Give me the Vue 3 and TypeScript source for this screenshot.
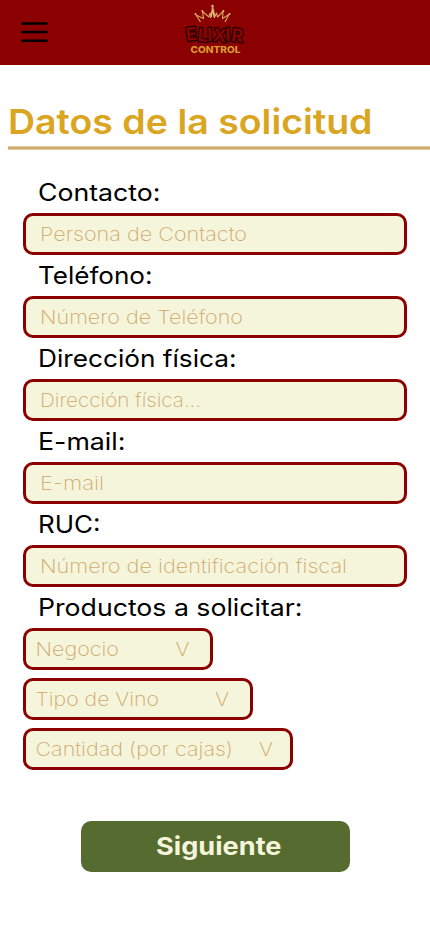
<script setup lang="ts">
import { defineComponent, h } from 'vue'

interface Field {
  label: string
  labelX: number
  labelWidth: number
  hint: string
  hintWidth: number
}

interface Choice {
  text: string
  textX: number
  textWidth: number
  arrowX: number
  width: number
}

// A single line of text fitted to a fixed measure.
const FitText = defineComponent({
  props: {
    text: { type: String, required: true },
    x: { type: Number, required: true },
    y: { type: Number, required: true },
    measure: { type: Number, required: true },
  },
  setup(props) {
    return () =>
      h('svg', { class: 'fit' }, [
        h(
          'text',
          {
            x: props.x,
            y: props.y,
            textLength: props.measure,
            lengthAdjust: 'spacingAndGlyphs',
          },
          props.text,
        ),
      ])
  },
})

const fields: Field[] = [
  { label: 'Contacto', labelX: 15, labelWidth: 122.5, hint: 'Persona de Contacto', hintWidth: 207 },
  { label: 'Teléfono', labelX: 15, labelWidth: 114.5, hint: 'Número de Teléfono', hintWidth: 203 },
  { label: 'Dirección física', labelX: 15, labelWidth: 198.5, hint: 'Dirección física...', hintWidth: 161 },
  { label: 'E-mail', labelX: 15, labelWidth: 87.5, hint: 'E-mail', hintWidth: 64 },
  { label: 'RUC', labelX: 15, labelWidth: 62.5, hint: 'Número de identificación fiscal', hintWidth: 307 },
]

const choices: Choice[] = [
  { text: 'Negocio', textX: 9.5, textWidth: 83.5, arrowX: 149.5, width: 190 },
  { text: 'Tipo de Vino', textX: 9.5, textWidth: 123.5, arrowX: 189, width: 230 },
  { text: 'Cantidad (por cajas)', textX: 9.5, textWidth: 197.5, arrowX: 233, width: 270 },
]
</script>

<template>
  <div class="screen">
    <header class="bar">
      <button class="menu" aria-label="Menú">
        <svg viewBox="0 0 27 21">
          <path d="M1.500 1.500H25.500M1.500 10H25.500M1.500 18.700H25.500" />
        </svg>
      </button>
      <svg class="logo" viewBox="0 0 70 56">
        <path
          class="crown"
          d="M20.500 22 L16 15 L23.500 18.500 L22.500 11.500 L29 17 L30 13 L31.500 16.500 L32.500 6 L35 16.500 L36.500 13 L37.500 17 L43 11.500 L42.500 18.500 L49 14.500 L45 22"
        />
        <path class="crown glow" d="M30.500 18 L32.500 10 L34.500 18" />
        <g class="gems">
          <circle cx="15.500" cy="14" r="1" /><circle cx="22.300" cy="11" r="1" />
          <circle cx="32.500" cy="6" r="1.200" /><circle cx="43.300" cy="11" r="1" />
          <circle cx="49.500" cy="14" r="1" />
        </g>
        <text class="brand" x="6.500" y="41" textLength="56" lengthAdjust="spacingAndGlyphs" rotate="-7 4 -3 6 -3 7">ELIXIR</text>
        <text class="sub" x="10.500" y="52.800" textLength="50" lengthAdjust="spacingAndGlyphs">CONTROL</text>
      </svg>
    </header>

    <h1 class="title">
      <FitText text="Datos de la solicitud" :x="0" :y="69" :measure="364.5" />
    </h1>
    <div class="rule"></div>

    <main class="form">
      <template v-for="f in fields" :key="f.label">
        <label class="label">
          <FitText :text="f.label + ':'" :x="f.labelX" :y="29" :measure="f.labelWidth" />
        </label>
        <div class="box">
          <FitText :text="f.hint" :x="14" :y="25" :measure="f.hintWidth" />
        </div>
      </template>

      <div class="label">
        <FitText text="Productos a solicitar:" :x="15" :y="29" :measure="264.5" />
      </div>
      <div class="choices">
        <div v-for="c in choices" :key="c.text" class="box" :style="{ width: c.width + 'px' }">
          <svg class="fit">
            <text :x="c.textX" y="25" :textLength="c.textWidth" lengthAdjust="spacingAndGlyphs">{{ c.text }}</text>
            <text :x="c.arrowX" y="25" textLength="14" lengthAdjust="spacingAndGlyphs">V</text>
          </svg>
        </div>
      </div>
    </main>

    <button class="next">
      <FitText text="Siguiente" :x="75" :y="34" :measure="125.5" />
    </button>
  </div>
</template>

<style>
body {
  margin: 0;
  background: #fff;
}

.fit {
  display: block;
  width: 100%;
  height: 100%;
  overflow: visible;
}

.fit text {
  fill: currentColor;
}
</style>

<style scoped>
.screen {
  display: flex;
  flex-direction: column;
  height: 932px;
  overflow: hidden;
  font-family: Inter, "Open Sans", sans-serif;
  background: #fff;
}

.bar {
  display: grid;
  grid-template-columns: 180px 70px 1fr;
  height: 65px;
  background: #8b0000;
}

.menu {
  align-self: start;
  width: 27px;
  height: 21px;
  margin: 22px 0 0 21px;
  padding: 0;
  border: 0;
  background: none;
}

.menu svg {
  display: block;
  width: 27px;
  height: 21px;
}

.menu path {
  fill: none;
  stroke: #000;
  stroke-width: 2.6;
  stroke-linecap: round;
}

.logo {
  width: 70px;
  height: 56px;
}

.crown {
  fill: none;
  stroke: #d9a661;
  stroke-width: 1.1;
  stroke-linejoin: round;
}

.glow {
  stroke: #e8c58e;
}

.gems {
  fill: #e3bd80;
}

.brand {
  font-size: 18px;
  font-weight: 700;
  fill: #8b0000;
  stroke: #250000;
  stroke-width: 2.6;
  stroke-linejoin: round;
  paint-order: stroke;
}

.sub {
  font-size: 9px;
  font-weight: 800;
  fill: #d99a32;
}

.title {
  height: 81px;
  margin: 0 0 0 8px;
  color: #daa520;
  font-size: 34.5px;
  font-weight: 600;
}

.rule {
  box-sizing: border-box;
  height: 4px;
  margin-left: 8px;
  border-top: 1px solid #e0c8a0;
  border-bottom: 1px solid #e0c8a0;
  background: #d2ac6e;
}

.form {
  padding: 22px 23px 0;
}

.label {
  display: block;
  height: 41px;
  color: #000;
  font-size: 24px;
  font-weight: 430;
}

.box {
  box-sizing: border-box;
  height: 42px;
  border: 3px solid #8b0000;
  border-radius: 10px;
  background: #f5f5dc;
  color: #d0a76a;
  font-size: 19.3px;
  font-weight: 220;
}

.choices {
  display: flex;
  flex-direction: column;
  gap: 8px;
}

.next {
  width: 269px;
  height: 51px;
  margin: 51px 0 0 81px;
  padding: 0;
  border: 0;
  border-radius: 10px;
  background: #556b2f;
  color: #f5f5dc;
  font-family: inherit;
  font-size: 24.5px;
  font-weight: 700;
  text-align: left;
}
</style>
